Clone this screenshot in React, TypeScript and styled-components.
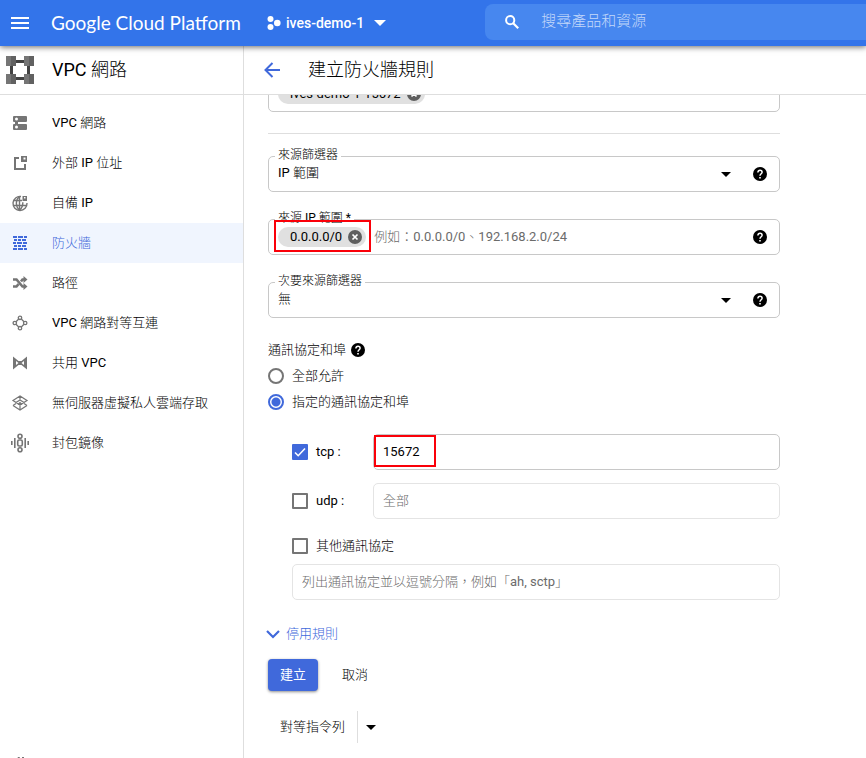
import React, { useState } from "react";
import styled, { createGlobalStyle } from "styled-components";

const blue = "#4069db";
const grey = "#757575";
const line = "#c8c8c8";
const hairline = "#dedede";

const GlobalStyle = createGlobalStyle`
  *, *::before, *::after { box-sizing: border-box; }
  body {
    margin: 0;
    background: #fff;
    color: #000;
    font: 400 13px/20px Roboto, "Noto Sans CJK TC Light", "Noto Sans CJK TC", sans-serif;
  }
  button, input, select { font: inherit; color: inherit; letter-spacing: inherit; }
  button { border: 0; padding: 0; background: none; cursor: pointer; }
  svg { display: block; flex: none; }
`;

const Page = styled.div`
  height: 100vh;
  display: flex;
  flex-direction: column;
  overflow: hidden;
`;

const TopBar = styled.header`
  position: relative;
  z-index: 2;
  flex: none;
  display: flex;
  align-items: center;
  height: 46px;
  padding-left: 11px;
  color: #fff;
  background: #3374ea;
  box-shadow: 0 1px 6px rgba(0, 0, 0, 0.6);
`;

const Brand = styled.a`
  flex: none;
  width: 238px;
  padding-left: 22px;
  color: inherit;
  font: 400 19px/24px Lato, sans-serif;
  text-decoration: none;
  white-space: nowrap;
`;

const ProjectButton = styled.button`
  display: flex;
  align-items: center;
  gap: 5px;
  font-size: 14px;
  font-weight: 500;
  white-space: nowrap;

  svg:last-child { margin-left: 5px; }
`;

const SearchBox = styled.label`
  flex: 1;
  display: flex;
  align-items: center;
  gap: 22px;
  height: 36px;
  margin: 0 0 2px 99px;
  padding-left: 20px;
  border-radius: 8px 0 0 8px;
  background: #4787ef;
`;

const SearchInput = styled.input`
  flex: 1;
  min-width: 0;
  border: 0;
  outline: 0;
  padding: 0 0 2px;
  background: transparent;
  font-size: 15px;
  line-height: 24px;

  &::placeholder { color: #c3d8fa; opacity: 1; }
`;

const Body = styled.div`
  flex: 1;
  min-height: 0;
  display: flex;
`;

const Sidebar = styled.aside`
  flex: none;
  display: flex;
  flex-direction: column;
  width: 244px;
  border-right: 1px solid ${hairline};
`;

const TitleBar = styled.div`
  flex: none;
  display: flex;
  align-items: center;
  height: 49px;
  border-bottom: 1px solid ${hairline};
`;

const SideTitle = styled(TitleBar)`
  padding-left: 6px;
  gap: 18px;
`;

const MainTitle = styled(TitleBar)`
  padding-left: 20px;
  gap: 28px;
`;

const Title = styled.h1`
  margin: 0;
  font-size: 18px;
  line-height: 26px;
  font-weight: 400;
`;

const Nav = styled.nav`
  padding-top: 8px;
`;

const NavLink = styled.a<{ $active?: boolean }>`
  display: flex;
  align-items: center;
  gap: 22px;
  height: 40px;
  padding-left: 10px;
  color: ${(p) => (p.$active ? blue : "#000")};
  background: ${(p) => (p.$active ? "#f0f5fe" : "transparent")};
  text-decoration: none;

  svg { color: ${(p) => (p.$active ? blue : grey)}; }
`;

const CollapseButton = styled.button`
  flex: none;
  height: 1px;
  margin: auto 0 0 14px;
  overflow: hidden;
`;

const Main = styled.main`
  flex: 1;
  min-width: 0;
  display: flex;
  flex-direction: column;
`;

const ScrollArea = styled.div`
  flex: 1;
  min-height: 0;
  overflow: hidden;
  padding: 0 24px;
`;

const Form = styled.form`
  max-width: 512px;
  margin-top: -19px;
`;

const Divider = styled.hr`
  margin: 21px 0 22px;
  border: 0;
  border-top: 1px solid ${hairline};
`;

const Stack = styled.div`
  display: flex;
  flex-direction: column;
  gap: 27px;
`;

const Field = styled.div<{ $muted?: boolean }>`
  position: relative;
  flex: 1 1 auto;
  display: flex;
  align-items: center;
  height: 36px;
  border: 1px solid ${(p) => (p.$muted ? "#e4e4e4" : line)};
  border-radius: 5px;
`;

const FloatingLabel = styled.label`
  position: absolute;
  top: -10px;
  left: 6px;
  padding: 0 3px;
  background: #fff;
  font-size: 12px;
  line-height: 16px;
`;

const Select = styled.select`
  position: relative;
  z-index: 1;
  flex: 1;
  align-self: stretch;
  appearance: none;
  border: 0;
  outline: 0;
  padding: 0 0 2px 9px;
  background: transparent;
`;

const TextInput = styled.input`
  flex: 1;
  min-width: 0;
  align-self: stretch;
  border: 0;
  outline: 0;
  padding: 0 9px;
  background: transparent;

  &::placeholder { color: #6b6b6b; opacity: 1; }
`;

const ChipInput = styled(TextInput)`
  padding: 0 8px;
`;

const Chip = styled.span`
  position: relative;
  z-index: 1;
  display: flex;
  align-items: center;
  gap: 6px;
  height: 20px;
  margin-left: 9px;
  padding: 0 4px 0 12px;
  border-radius: 10px;
  background: #e0e0e0;
`;

const HelpButton = styled.button`
  margin: 0 12px 0 22px;
`;

const Highlight = styled.span<{ $wide?: boolean }>`
  position: absolute;
  z-index: 2;
  top: 0;
  left: ${(p) => (p.$wide ? "5px" : "0")};
  width: ${(p) => (p.$wide ? "97px" : "62px")};
  height: 32px;
  border: 2px solid #fa0009;
  pointer-events: none;
`;

const Group = styled.fieldset`
  margin: 22px 0 0;
  padding: 0;
  border: 0;
`;

const GroupLabel = styled.legend`
  display: flex;
  align-items: center;
  gap: 5px;
  padding: 0;
  line-height: 20px;
`;

const Choices = styled.div`
  padding-top: 3px;
`;

const Choice = styled.label`
  display: flex;
  align-items: center;
  gap: 8px;
  height: 26px;
`;

const Radio = styled.input.attrs({ type: "radio" })`
  appearance: none;
  flex: none;
  width: 16px;
  height: 16px;
  margin: 0;
  border: 2px solid ${grey};
  border-radius: 50%;

  &:checked {
    border-color: ${blue};
    background: radial-gradient(circle, ${blue} 4px, #fff 5px);
  }
`;

const Protocols = styled.div`
  display: flex;
  flex-direction: column;
  padding: 19px 0 0 24px;
`;

const ProtocolRow = styled.div`
  display: flex;
  align-items: center;
  margin-bottom: 13px;
`;

const ProtocolChoice = styled(Choice)`
  flex: none;
  width: 81px;
`;

const OtherChoice = styled(Choice)`
  margin: 1px 0 5px;
`;

const CheckWrap = styled.span`
  display: grid;
  flex: none;
  width: 16px;
  height: 16px;

  > * { grid-area: 1 / 1; }
  > svg { pointer-events: none; }
`;

const CheckInput = styled.input.attrs({ type: "checkbox" })`
  appearance: none;
  width: 16px;
  height: 16px;
  margin: 0;
  border: 2px solid ${grey};
  border-radius: 1px;

  &:checked { border-color: ${blue}; background: ${blue}; }
  &:not(:checked) + svg { visibility: hidden; }
`;

const Expander = styled.button`
  display: flex;
  align-items: center;
  gap: 6px;
  margin: 24px 0 15px -2px;
  color: ${blue};
`;

const Actions = styled.div`
  display: flex;
  gap: 24px;
`;

const PrimaryButton = styled.button`
  height: 32px;
  padding: 0 12px;
  border-radius: 4px;
  color: #fff;
  font-family: Roboto, "Noto Sans CJK TC", sans-serif;
  background: ${blue};
  box-shadow: 0 1px 3px rgba(0, 0, 0, 0.45);
`;

const CommandRow = styled.div`
  display: flex;
  height: 32px;
  margin-top: 20px;
`;

const CommandButton = styled.button`
  padding: 0 12px;
  border-right: 1px solid ${hairline};
`;

const CommandMenu = styled.button`
  padding: 0 8px;
`;

const Icon = ({ size = 20, children }: { size?: number; children: React.ReactNode }) => (
  <svg width={size} height={size} viewBox={`0 0 ${size} ${size}`} fill="currentColor" aria-hidden="true">
    {children}
  </svg>
);

const Caret = ({ w = 10, h = 5 }: { w?: number; h?: number }) => (
  <svg width={w} height={h} viewBox="0 0 10 5" fill="currentColor" preserveAspectRatio="none" aria-hidden="true">
    <path d="M0 0h10L5 5z" />
  </svg>
);

const HelpIcon = () => (
  <Icon size={14}>
    <circle cx="7" cy="7" r="7" />
    <path d="M4.9 5.5C4.9 4.1 5.8 3.3 7 3.3s2.1.8 2.1 2C9.1 6.7 7 6.9 7 8.7" fill="none" stroke="#fff" strokeWidth="1.5" />
    <path d="M6.2 9.9h1.600v1.500H6.200z" fill="#fff" />
  </Icon>
);

const CloseIcon = () => (
  <Icon size={14}>
    <circle cx="7" cy="7" r="7" fill="#5f5f5f" />
    <path d="M4.500 4.500l5 5m0-5l-5 5" stroke="#fff" strokeWidth="1.700" />
  </Icon>
);

const MenuIcon = () => (
  <svg width="18" height="12" viewBox="0 0 18 12" fill="#fff" aria-hidden="true">
    <path d="M0 0h18v2H0zM0 5h18v2H0zM0 10h18v2H0z" />
  </svg>
);

const ProjectIcon = () => (
  <Icon size={14}>
    <circle cx="3.500" cy="3" r="3" />
    <circle cx="10.300" cy="7" r="3.300" />
    <circle cx="3.500" cy="11" r="3" />
  </Icon>
);

const SearchIcon = () => (
  <Icon size={14}>
    <circle cx="5.200" cy="5.200" r="4.100" fill="none" stroke="#fff" strokeWidth="2" />
    <path d="M8.200 8.200l5 5" stroke="#fff" strokeWidth="2.200" />
  </Icon>
);

const ProductIcon = () => (
  <Icon size={28}>
    <path fill="#424242" d="M10 4h8v3h-8zM10 21h8v3h-8zM4 10h3v8H4zM21 10h3v8h-3z" />
    <path fill="#757575" d="M0 0h5v10H0zM18 0h5v10h-5zM0 18h5v10H0zM18 18h5v10h-5z" />
    <path fill="#616161" d="M5 0h5v10H5zM23 0h5v10h-5zM5 18h5v10H5zM23 18h5v10h-5z" />
  </Icon>
);

const BackIcon = () => (
  <Icon size={16}>
    <path d="M16 8H1.500M8.500 1L1.500 8l7 7" fill="none" stroke={blue} strokeWidth="2" />
  </Icon>
);

const navIcons = {
  network: (
    <Icon>
      <path fillRule="evenodd" d="M4 3h12a1 1 0 011 1v4a1 1 0 01-1 1H8v2h8a1 1 0 011 1v4a1 1 0 01-1 1H4a1 1 0 01-1-1v-4a1 1 0 011-1h1V9H4a1 1 0 01-1-1V4a1 1 0 011-1zm2.500 1.500a1.500 1.500 0 100 3 1.500 1.500 0 000-3zm0 8a1.500 1.500 0 100 3 1.500 1.500 0 000-3z" />
    </Icon>
  ),
  address: (
    <Icon>
      <path d="M9 4H4v13h12v-6h-2v4H6V6h3z" />
      <path fillRule="evenodd" d="M11 3h6v6h-6zm2.500 1.500v2h2v-2z" />
    </Icon>
  ),
  globe: (
    <Icon>
      <g fill="none" stroke="currentColor" strokeWidth="1.400">
        <path d="M11 3.500A7 7 0 1017 10M3 7.500h9M3 12.500h13.500M9.500 3.500v14" />
        <path d="M9.500 3.300c-4.200 4-4.200 10 0 14M9.500 17.300c2.500-2.300 3.500-4.800 3.300-8" />
      </g>
      <path d="M12.500 3H17v5h-4.500z" />
      <path fill="#fff" d="M14 4h1.500v1.500H14z" />
    </Icon>
  ),
  firewall: (
    <Icon>
      <path d="M3 3h4v2H3zM8 3h5v2H8zM14 3h3v2h-3zM4 6h3v2H4zM8 6h3v2H8zM12 6h4v2h-4zM3 9h3v2H3zM7 9h5v2H7zM13 9h4v2h-4zM4 12h3v2H4zM8 12h3v2H8zM12 12h4v2h-4zM3 15h4v2H3zM8 15h5v2H8zM14 15h3v2h-3z" />
    </Icon>
  ),
  routes: (
    <Icon>
      <path d="M3 6.500h3.500l6 7H15M3 13.500h3.500l2-2.300M11 8.500l1.500-2H15" fill="none" stroke="currentColor" strokeWidth="2.600" />
      <path d="M13.500 3l4 3.500-4 3.500zM13.500 10l4 3.500-4 3.500z" />
    </Icon>
  ),
  peering: (
    <Icon>
      <g fill="none" stroke="currentColor" strokeWidth="1.300">
        <circle cx="10" cy="4.800" r="1.700" />
        <circle cx="10" cy="15.200" r="1.700" />
        <circle cx="4.800" cy="10" r="1.700" />
        <circle cx="15.200" cy="10" r="1.700" />
        <path d="M8.700 6L6 8.700M11.300 6L14 8.700M8.700 14L6 11.300M11.300 14l2.700-2.700" />
      </g>
    </Icon>
  ),
  shared: (
    <Icon>
      <path fillRule="evenodd" d="M3 3.500L8.500 8h3L17 3.500v13L11.500 12h-3L3 16.500zM6 8v4l2.500-2zM14 8l-2.500 2 2.500 2z" />
    </Icon>
  ),
  serverless: (
    <Icon>
      <g fill="none" stroke="currentColor" strokeWidth="1.200">
        <path d="M10 3L3 7.500l7 4.500 7-4.500zM3 12.500L10 17l7-4.500M3 12.500l3-2M17 12.500l-3-2M10 3v4M6 9.500l4-2.500 4 2.500M10 10v6" />
        <path d="M8 11.500l2-2 2 2" />
      </g>
    </Icon>
  ),
  mirroring: (
    <Icon>
      <g fill="none" stroke="currentColor" strokeWidth="1.600">
        <circle cx="10" cy="3.300" r="2" />
        <circle cx="10" cy="16.700" r="2" />
        <rect x="7.700" y="7" width="4.600" height="6" rx="1.500" />
        <path d="M1.800 8v4M4.800 5v10M15.200 5v10M18.200 8v4" />
      </g>
    </Icon>
  ),
};

const navItems: { icon: keyof typeof navIcons; label: string; active?: boolean }[] = [
  { icon: "network", label: "VPC 網路" },
  { icon: "address", label: "外部 IP 位址" },
  { icon: "globe", label: "自備 IP" },
  { icon: "firewall", label: "防火牆", active: true },
  { icon: "routes", label: "路徑" },
  { icon: "peering", label: "VPC 網路對等互連" },
  { icon: "shared", label: "共用 VPC" },
  { icon: "serverless", label: "無伺服器虛擬私人雲端存取" },
  { icon: "mirroring", label: "封包鏡像" },
];

const Help = () => (
  <HelpButton type="button" aria-label="說明">
    <HelpIcon />
  </HelpButton>
);

const ValueChip = ({ children }: { children: string }) => (
  <Chip>
    {children}
    <button type="button" aria-label="移除">
      <CloseIcon />
    </button>
  </Chip>
);

const SelectField = ({ id, label, value }: { id: string; label: string; value: string }) => (
  <Field>
    <Select id={id}>
      <option>{value}</option>
    </Select>
    <FloatingLabel htmlFor={id}>{label}</FloatingLabel>
    <Caret />
    <Help />
  </Field>
);

const Checkbox = ({ id, defaultChecked }: { id: string; defaultChecked?: boolean }) => (
  <CheckWrap>
    <CheckInput id={id} defaultChecked={defaultChecked} />
    <Icon size={16}>
      <path d="M3 8.500l3.200 3.200L13 4.500" fill="none" stroke="#fff" strokeWidth="1.600" />
    </Icon>
  </CheckWrap>
);

export default function App() {
  const [mode, setMode] = useState("specified");

  return (
    <Page>
      <GlobalStyle />
      <TopBar>
        <button type="button" aria-label="選單">
          <MenuIcon />
        </button>
        <Brand href="#">Google Cloud Platform</Brand>
        <ProjectButton type="button">
          <ProjectIcon />
          ives-demo-1
          <Caret w={12} h={6} />
        </ProjectButton>
        <SearchBox>
          <SearchIcon />
          <SearchInput placeholder="搜尋產品和資源" aria-label="搜尋產品和資源" />
        </SearchBox>
      </TopBar>

      <Body>
        <Sidebar>
          <SideTitle>
            <ProductIcon />
            <Title as="h2">VPC 網路</Title>
          </SideTitle>
          <Nav>
            {navItems.map((item) => (
              <NavLink key={item.label} href="#" $active={item.active}>
                {navIcons[item.icon]}
                {item.label}
              </NavLink>
            ))}
          </Nav>
          <CollapseButton type="button" aria-label="收合選單">
            <Icon size={12}>
              <path d="M4 0h2L3 6l3 6H4L1 6zM8 0h2v12H8z" fill={grey} />
            </Icon>
          </CollapseButton>
        </Sidebar>

        <Main>
          <MainTitle>
            <button type="button" aria-label="返回">
              <BackIcon />
            </button>
            <Title>建立防火牆規則</Title>
          </MainTitle>
          <ScrollArea>
            <Form onSubmit={(e) => e.preventDefault()}>
              <Field>
                <ValueChip>ives-demo-1-15672</ValueChip>
                <ChipInput aria-label="目標標記" />
              </Field>
              <Divider />
              <Stack>
                <SelectField id="source-filter" label="來源篩選器" value="IP 範圍" />
                <Field>
                  <FloatingLabel htmlFor="source-ranges">來源 IP 範圍 *</FloatingLabel>
                  <ValueChip>0.0.0.0/0</ValueChip>
                  <ChipInput id="source-ranges" placeholder="例如：0.0.0.0/0、192.168.2.0/24" />
                  <Help />
                  <Highlight $wide />
                </Field>
                <SelectField id="second-filter" label="次要來源篩選器" value="無" />
              </Stack>

              <Group>
                <GroupLabel>
                  通訊協定和埠
                  <button type="button" aria-label="說明">
                    <HelpIcon />
                  </button>
                </GroupLabel>
                <Choices>
                  <Choice>
                    <Radio name="mode" checked={mode === "all"} onChange={() => setMode("all")} />
                    全部允許
                  </Choice>
                  <Choice>
                    <Radio name="mode" checked={mode === "specified"} onChange={() => setMode("specified")} />
                    指定的通訊協定和埠
                  </Choice>
                </Choices>
                <Protocols>
                  <ProtocolRow>
                    <ProtocolChoice htmlFor="tcp">
                      <Checkbox id="tcp" defaultChecked />
                      tcp :
                    </ProtocolChoice>
                    <Field>
                      <TextInput aria-label="tcp" defaultValue="15672" />
                      <Highlight />
                    </Field>
                  </ProtocolRow>
                  <ProtocolRow>
                    <ProtocolChoice htmlFor="udp">
                      <Checkbox id="udp" />
                      udp :
                    </ProtocolChoice>
                    <Field $muted>
                      <TextInput aria-label="udp" placeholder="全部" />
                    </Field>
                  </ProtocolRow>
                  <OtherChoice htmlFor="other">
                    <Checkbox id="other" />
                    其他通訊協定
                  </OtherChoice>
                  <Field $muted>
                    <TextInput aria-label="其他通訊協定" placeholder="列出通訊協定並以逗號分隔，例如「ah, sctp」" />
                  </Field>
                </Protocols>
              </Group>

              <Expander type="button">
                <svg width="14" height="9" viewBox="0 0 14 9" aria-hidden="true">
                  <path d="M1 1l6 6 6-6" fill="none" stroke={blue} strokeWidth="2.200" />
                </svg>
                停用規則
              </Expander>
              <Actions>
                <PrimaryButton type="submit">建立</PrimaryButton>
                <button type="button">取消</button>
              </Actions>
              <CommandRow>
                <CommandButton type="button">對等指令列</CommandButton>
                <CommandMenu type="button" aria-label="更多選項">
                  <Caret />
                </CommandMenu>
              </CommandRow>
            </Form>
          </ScrollArea>
        </Main>
      </Body>
    </Page>
  );
}
